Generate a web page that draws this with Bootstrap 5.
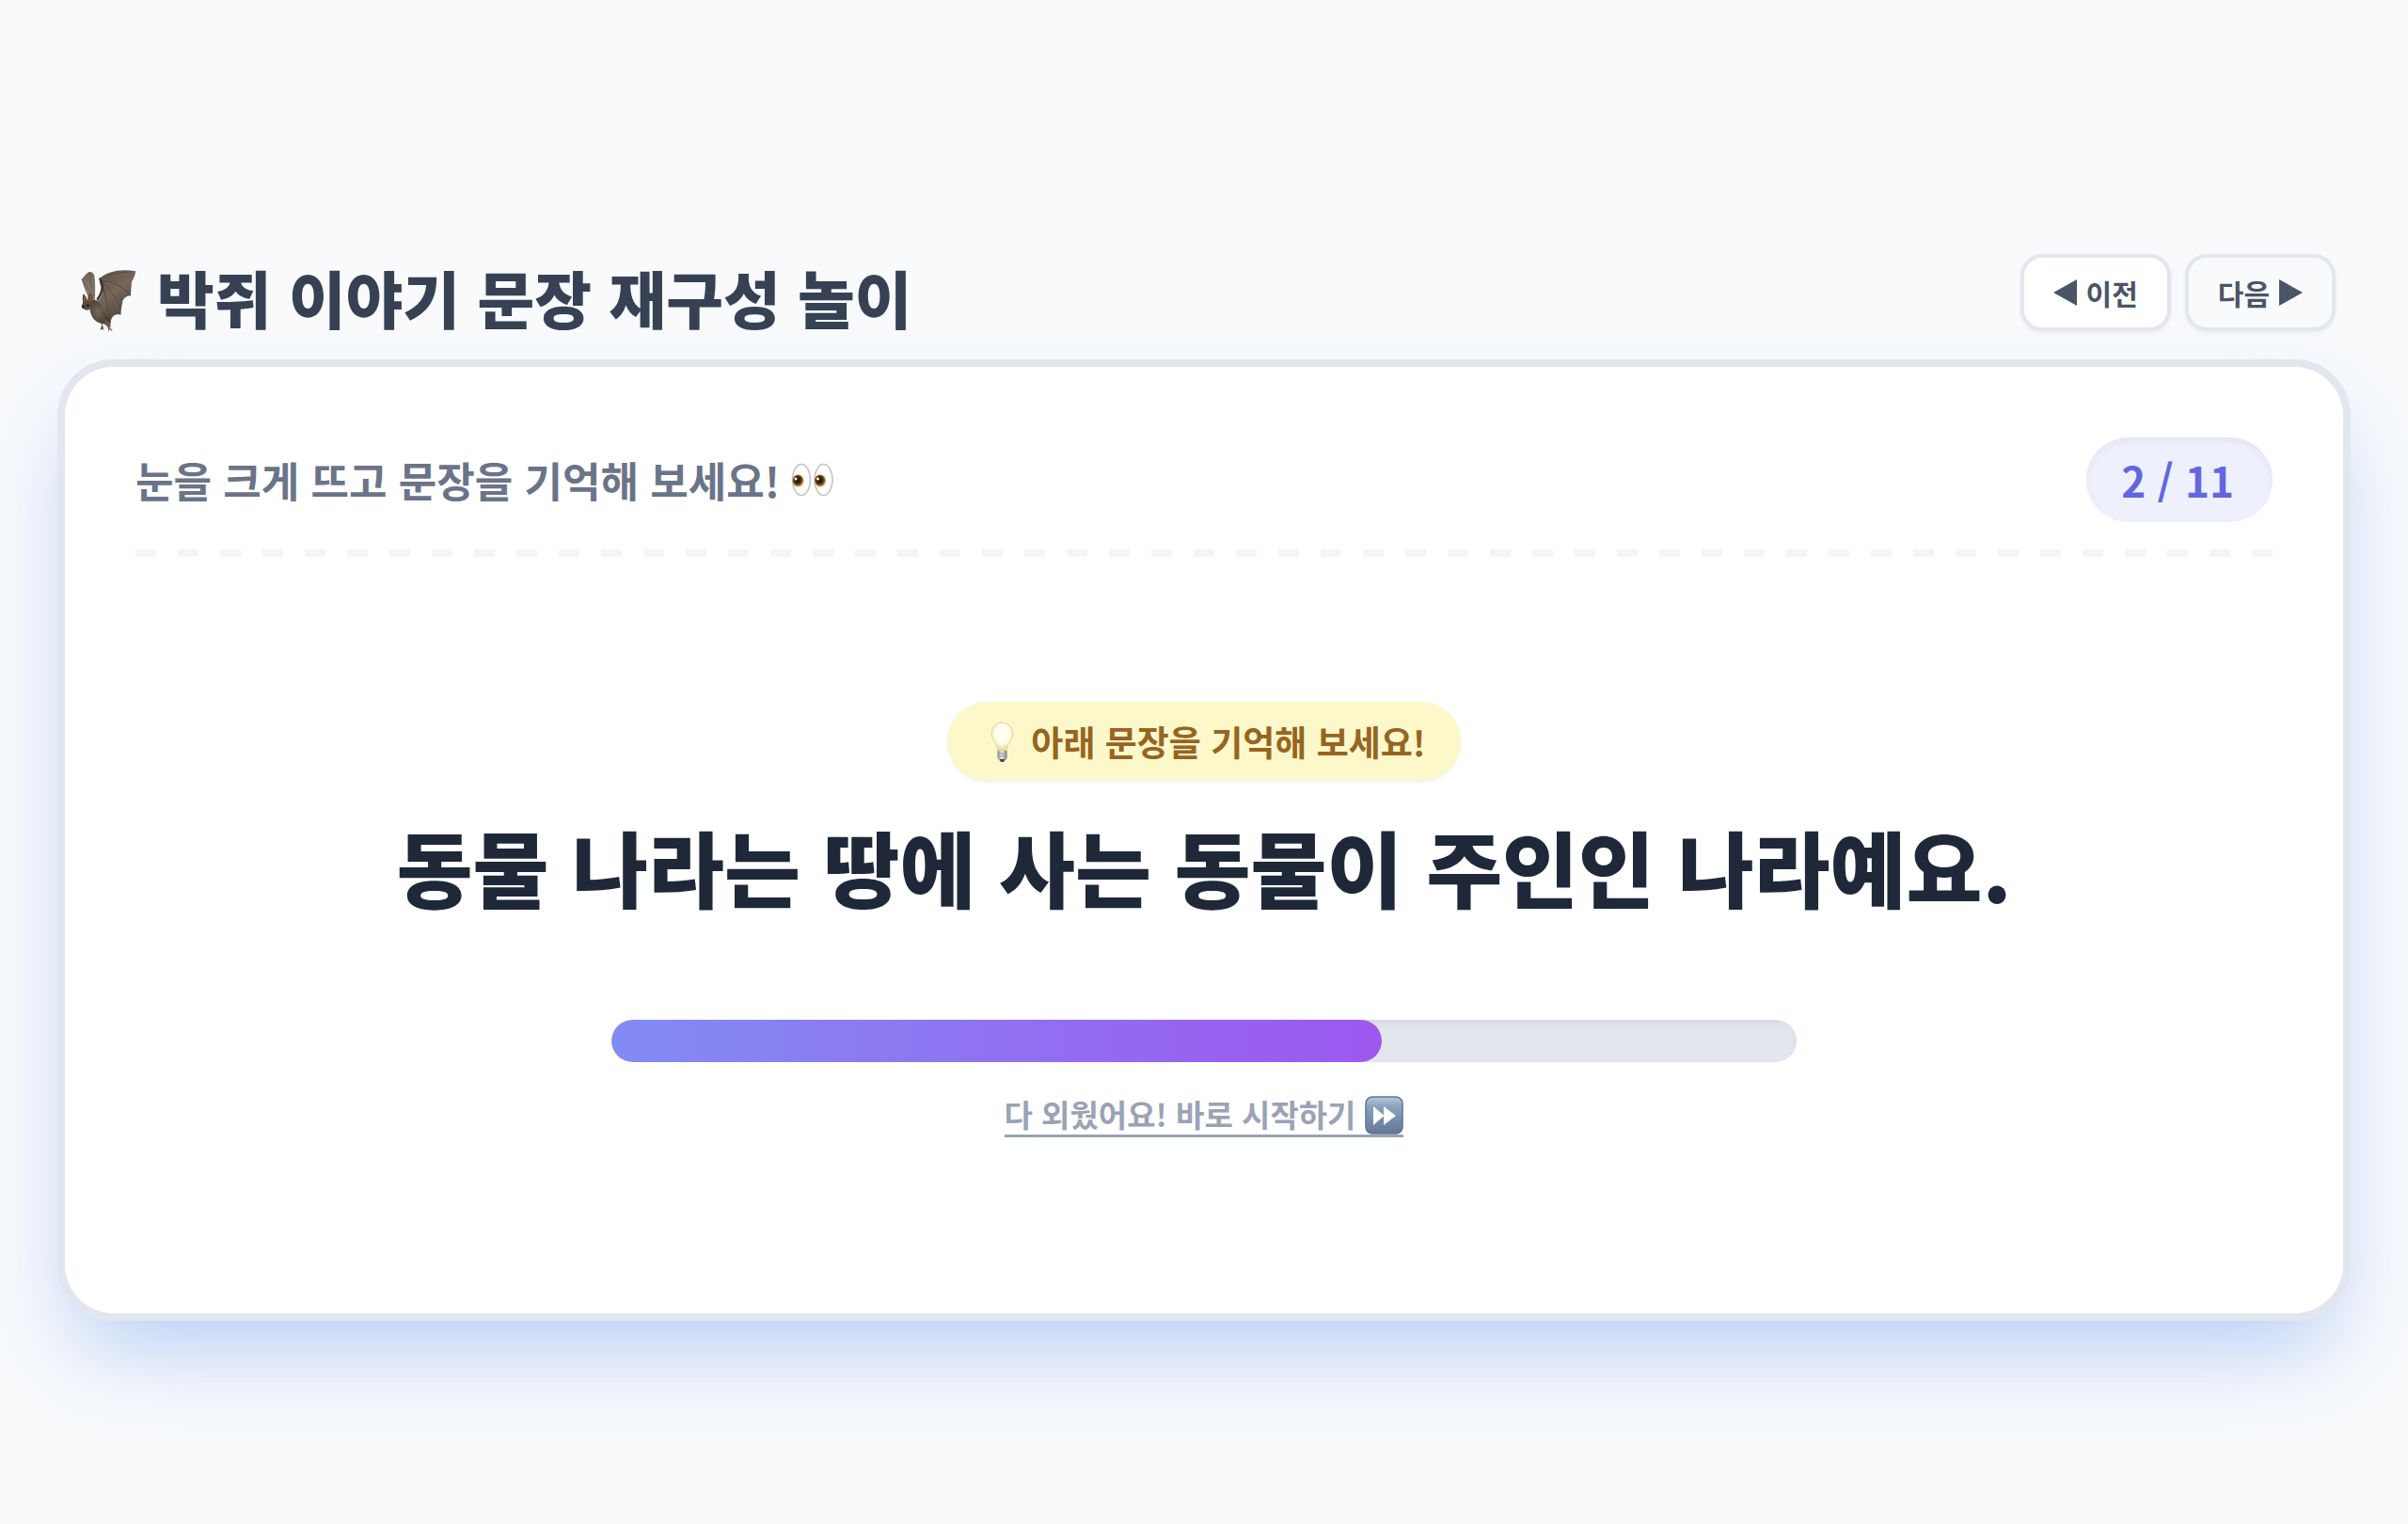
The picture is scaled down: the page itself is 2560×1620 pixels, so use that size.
<!DOCTYPE html>
<html lang="ko">
<head>
<meta charset="utf-8">
<meta name="viewport" content="width=device-width, initial-scale=1">
<title>박쥐 이야기 문장 재구성 놀이</title>
<link href="https://cdn.jsdelivr.net/npm/bootstrap@5.3.0/dist/css/bootstrap.min.css" rel="stylesheet">
<style>
  body { background: #f8fafc; font-family: "Noto Sans CJK KR", "Noto Sans", sans-serif; color: #1f2839; }
  .page { padding: 270px 61px 120px; }
  .topbar { padding: 0 16px 30px 22px; }
  .game-title { font-size: 66px; line-height: 74px; font-weight: 900; color: #364154; gap: 19px; padding-top: 8px; }
  .btn-row { gap: 15px; }
  .nav-btn { --bs-btn-bg: #fff; --bs-btn-color: #4a5567; --bs-btn-border-color: #e2e6ee;
    --bs-btn-hover-bg: #f8fafc; --bs-btn-hover-color: #4a5567; --bs-btn-hover-border-color: #e2e6ee;
    font-size: 30px; line-height: 44px; font-weight: 700; padding: 15px 31px; border-width: 4px;
    border-radius: 23px; box-shadow: 0 2px 4px rgba(15, 23, 42, .06); gap: 10px; }
  .nav-btn.is-hovered { --bs-btn-bg: #f8fafc; }
  .game-card { background: #fff; border: 8px solid #e2e6ee; border-radius: 60px; padding: 75px;
    box-shadow: 0 47px 94px -22px rgba(59, 120, 235, .36); }
  .guide-row { padding-bottom: 37px; background: repeating-linear-gradient(90deg, #f3f5f9 0 22px, transparent 22px 45px) left bottom / 100% 8px no-repeat; }
  .guide-text { font-size: 44px; line-height: 60px; font-weight: 700; color: #6a7489; gap: 12px; }
  .counter { font-size: 44px; line-height: 60px; font-weight: 700; color: #6366e0; background: #eef0fe;
    padding: 15px 41px 15px 37px; box-shadow: inset 0 4px 8px rgba(0, 0, 0, .05); }
  .stage { padding: 154px 0 112px; }
  .hint { font-size: 37px; line-height: 54px; font-weight: 700; color: #976422; background: #fdf8c9;
    padding: 15px 37px; gap: 15px; box-shadow: 0 2px 4px rgba(0, 0, 0, .05); }
  .sentence { font-size: 88px; line-height: 112px; font-weight: 900; margin: 34px 0 108px; }
  .timer { width: 100%; max-width: 1260px; height: 45px; border-radius: 23px; background: #e2e6ee; position: relative; overflow: hidden; }
  .timer .progress-bar { border-radius: 23px; background: linear-gradient(90deg, #828cf3, #9d57ef); }
  .timer-shade { box-shadow: inset 0 4px 8px rgba(0, 0, 0, .06); }
  .skip { font-size: 33px; line-height: 44px; font-weight: 700; color: #9aa3b5; gap: 10px; margin-top: 33px; border-bottom: 3px solid #9aa3b5; }
  .skip:hover { color: #64748b; }
  svg { flex: none; display: block; }
</style>
</head>
<body>
<main class="page">
  <header class="topbar d-flex justify-content-between align-items-center">
    <h1 class="game-title d-flex align-items-center m-0">
      <svg class="mt-2" width="65" height="65" viewBox="26 38 186 194" aria-hidden="true">
        <defs>
          <linearGradient id="wing" x1="0" y1="0" x2="0.5" y2="1"><stop offset="0" stop-color="#594c43"/><stop offset=".5" stop-color="#77655a"/><stop offset="1" stop-color="#4e3f38"/></linearGradient>
          <linearGradient id="wing2" x1="0" y1="0" x2="0" y2="1"><stop offset="0" stop-color="#6e6355"/><stop offset="1" stop-color="#97897a"/></linearGradient>
          <radialGradient id="fur" cx=".4" cy=".45" r=".6"><stop offset="0" stop-color="#75695a"/><stop offset="1" stop-color="#40362c"/></radialGradient>
        </defs>
        <path d="M33 67 C42 60 47 48 58 44 Q68 43 73 53 Q77 75 76 110 L76 135 L62 137 Q45 110 33 67Z" fill="url(#wing2)"/>
        <path d="M33 67 Q52 88 69 128 M58 45 Q60 85 74 122" fill="none" stroke="#5d5044" stroke-width="2"/>
        <path d="M90 65 Q108 47 145 40 Q180 36 205 43 Q202 60 192 77 Q190 99 189 119 Q173 119 164 134 Q159 157 157 180 Q142 174 132 186 Q124 196 124 212 L99 206 L80 145 Q96 127 101 99 Q97 78 90 65Z" fill="url(#wing)"/>
        <path d="M96 72 Q130 46 204 43 M97 73 Q150 76 188 118 M97 73 Q142 116 157 179 M97 73 Q114 137 124 205" fill="none" stroke="#4b3d35" stroke-width="2.200"/>
        <path d="M98 70 Q132 52 200 45 M101 76 Q146 84 182 117 M103 84 Q139 120 153 174" fill="none" stroke="#8a7667" stroke-width="1.500"/>
        <path d="M88 65 L92 62 Q104 80 102 101 Q96 121 85 137 L80 130 Q93 113 95 94Z" fill="#40342c"/>
        <path d="M62 136 Q83 128 92 146 Q100 168 118 188 L124 215 L103 209 Q78 205 67 187 Q58 171 60 154Z" fill="url(#fur)"/>
        <path d="M37 143 Q35 124 38 113 Q48 120 52 136 Q53 118 61 109 Q70 118 69 137 Q74 154 58 163 Q48 169 35 159 Q31 155 37 143Z" fill="#594b3e"/>
        <path d="M40 119 Q47 126 48 137 L40 139Z M61 115 Q67 122 65 137 L57 137 Q55 124 61 115Z" fill="#8f503b"/>
        <ellipse cx="53" cy="149" rx="4" ry="4.500" fill="#15100c"/><circle cx="52" cy="147" r="1.200" fill="#fff"/>
        <path d="M33 153 Q38 149 44 154 L38 160Z" fill="#2c211b"/>
        <path d="M98 203 L98 226 M98 215 L94 228 M99 216 L103 228 M112 205 L119 225 M119 220 L130 230 M119 219 L120 231" fill="none" stroke="#644b42" stroke-width="3"/>
        <path d="M108 195 Q123 199 126 219 L115 218 L105 208Z" fill="#755044"/>
      </svg>
      <span>박쥐 이야기 문장 재구성 놀이</span>
    </h1>
    <nav class="btn-row d-flex" aria-label="문장 이동">
      <button type="button" class="btn nav-btn d-flex align-items-center">
        <svg width="25" height="28" viewBox="0 0 25 28" aria-hidden="true"><path d="M25 0V28L0 14Z" fill="currentColor"/></svg>이전
      </button>
      <button type="button" class="btn nav-btn is-hovered d-flex align-items-center">
        다음<svg width="25" height="28" viewBox="0 0 25 28" aria-hidden="true"><path d="M0 0V28L25 14Z" fill="currentColor"/></svg>
      </button>
    </nav>
  </header>

  <section class="game-card">
    <div class="guide-row d-flex justify-content-between align-items-center">
      <p class="guide-text d-flex align-items-center m-0">
        <span>눈을 크게 뜨고 문장을 기억해 보세요!</span>
        <svg width="46" height="36" viewBox="0 0 46 36" aria-hidden="true">
          <defs><radialGradient id="iris" cx=".45" cy=".45"><stop offset="0" stop-color="#1c0c02"/><stop offset=".6" stop-color="#4b2a08"/><stop offset="1" stop-color="#bd944c"/></radialGradient></defs>
          <g fill="#fff" stroke="#c4c1c1" stroke-width="1.500"><ellipse cx="11" cy="18" rx="9.500" ry="16.500"/><ellipse cx="34.500" cy="18" rx="9.500" ry="16.500"/></g>
          <g fill="url(#iris)"><ellipse cx="7.500" cy="19" rx="6" ry="6.500"/><ellipse cx="31" cy="19" rx="6" ry="6.500"/></g>
          <g fill="#fff"><circle cx="5" cy="17" r="1.500"/><circle cx="28.500" cy="17" r="1.500"/></g>
        </svg>
      </p>
      <span class="counter rounded-pill">2 / 11</span>
    </div>

    <div class="stage d-flex flex-column align-items-center">
      <div class="hint rounded-pill d-flex align-items-center">
        <svg width="37" height="44" viewBox="-3 0 37 44" aria-hidden="true">
          <defs>
            <radialGradient id="glass" cx=".5" cy=".4" r=".6"><stop offset="0" stop-color="#fff"/><stop offset=".6" stop-color="#fffbe9"/><stop offset="1" stop-color="#ead58e"/></radialGradient>
            <linearGradient id="cap"><stop offset="0" stop-color="#8b8b87"/><stop offset=".45" stop-color="#eee"/><stop offset="1" stop-color="#777"/></linearGradient>
          </defs>
          <path d="M14 32 Q13 24 9 20 A11.500 11.500 0 1 1 28 20 Q24 24 23 32Z" fill="url(#glass)" stroke="#e5d39a" stroke-width="1"/>
          <path d="M13.500 32H23.500V40L21 43H16L13.500 40Z" fill="url(#cap)"/>
          <path d="M13.500 35H23.500M13.500 38H23.500" stroke="#999" stroke-width="1"/>
          <path d="M15.500 41H21.500L20 44H17Z" fill="#444"/>
        </svg>
        <span>아래 문장을 기억해 보세요!</span>
      </div>
      <h2 class="sentence text-center">동물 나라는 땅에 사는 동물이 주인인 나라예요.</h2>
      <div class="timer" role="progressbar" aria-label="남은 시간" aria-valuenow="65" aria-valuemin="0" aria-valuemax="100">
        <div class="timer-shade position-absolute top-0 start-0 w-100 h-100"></div>
        <div class="progress-bar position-relative h-100" style="width: 65%"></div>
      </div>
      <a href="#" class="skip d-flex align-items-end text-decoration-none">
        <span>다 외웠어요! 바로 시작하기</span>
        <svg width="41" height="41" viewBox="0 0 41 41" aria-hidden="true">
          <defs><linearGradient id="key" x1="0" y1="0" x2="0" y2="1"><stop offset="0" stop-color="#b4cadf"/><stop offset=".25" stop-color="#8ba3c0"/><stop offset="1" stop-color="#627795"/></linearGradient></defs>
          <rect x="1" y="1" width="39" height="39" rx="7" fill="url(#key)" stroke="#5f7390" stroke-width="1.500"/>
          <path d="M9 11L20 20.500V11L33 21L20 31V21.500L9 31Z" fill="#fff"/>
        </svg>
      </a>
    </div>
  </section>
</main>
<script src="https://cdn.jsdelivr.net/npm/bootstrap@5.3.0/dist/js/bootstrap.bundle.min.js"></script>
</body>
</html>
